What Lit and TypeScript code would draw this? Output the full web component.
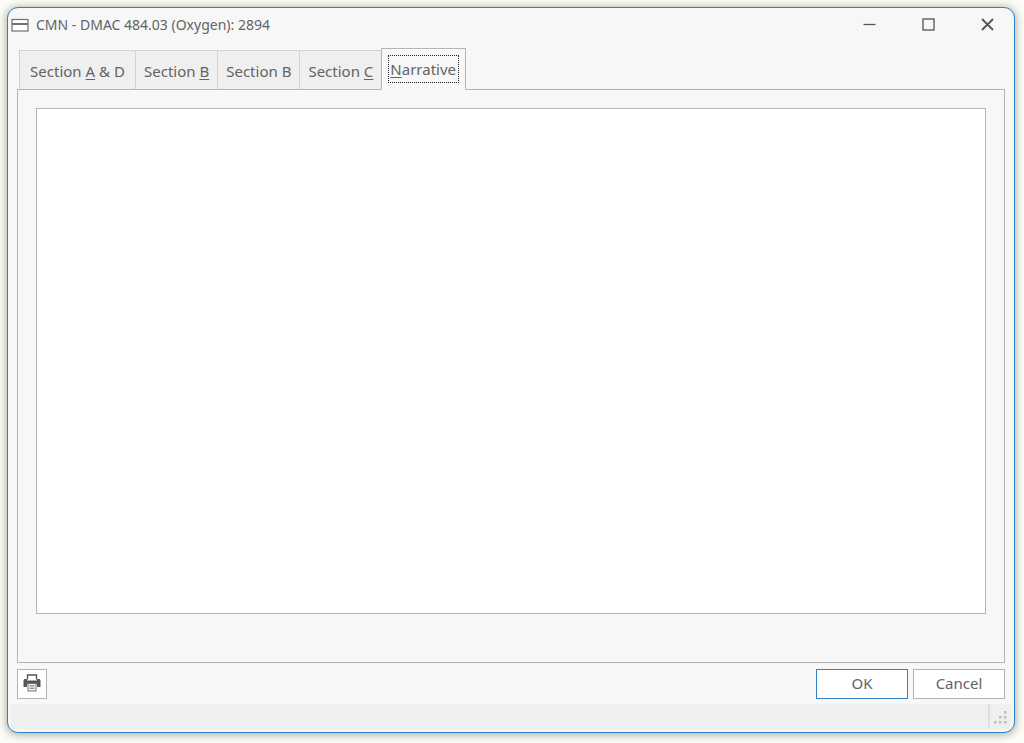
import { LitElement, html, css, svg } from "lit";
import { customElement, state } from "lit/decorators.js";

interface Tab {
  before: string;
  key: string;
  after: string;
}

const TABS: Tab[] = [
  { before: "Section ", key: "A", after: " & D" },
  { before: "Section ", key: "B", after: "" },
  { before: "Section B", key: "", after: "" },
  { before: "Section ", key: "C", after: "" },
  { before: "", key: "N", after: "arrative" },
];

const GRIP_DOTS = [
  [10, 0],
  [5, 5],
  [10, 5],
  [0, 10],
  [5, 10],
  [10, 10],
];

@customElement("app-root")
export class AppRoot extends LitElement {
  @state() private selected = 4;

  static styles = css`
    :host {
      display: flex;
      box-sizing: border-box;
      height: 100vh;
      padding: 7px 9px 10px 7px;
      background: #fdfdf8;
      font-family: "Noto Sans", "Open Sans", sans-serif;
      font-size: 15px;
      line-height: 20px;
      color: #636363;
    }
    * {
      box-sizing: border-box;
    }
    button {
      margin: 0;
      padding: 0;
      font: inherit;
      color: inherit;
      background: none;
      border: 0;
    }
    button:focus,
    textarea:focus {
      outline: none;
    }
    svg {
      display: block;
    }
    .window {
      flex: 1;
      min-width: 0;
      display: flex;
      flex-direction: column;
      background: #f7f7f7;
      border: 1px solid #2f82c8;
      border-radius: 11px;
      box-shadow: 0 1px 9px 1px rgba(70, 66, 45, 0.42);
      padding: 0 3px 3px;
    }
    .titlebar {
      display: flex;
      align-items: center;
      height: 33px;
    }
    .title {
      flex: 1;
      margin: 0 0 0 7px;
      font-size: 14px;
      font-weight: 400;
    }
    .caption {
      width: 59px;
      height: 32px;
      display: grid;
      place-items: center;
    }
    .controls {
      display: flex;
      margin-right: -6px;
    }
    .body {
      flex: 1;
      display: flex;
      flex-direction: column;
      padding: 7px 6px 5px 6px;
    }
    .tabs {
      display: flex;
      align-items: flex-end;
      padding-left: 2px;
      margin-bottom: -1px;
    }
    .tab {
      height: 40px;
      padding: 2px 8px 0 8px;
      background: #efefef;
      border: 1px solid #d2d2d2;
      border-right: 0;
      border-bottom-color: #b4b4b4;
      white-space: nowrap;
    }
    .tab:first-child {
      min-width: 116px;
    }
    .tab.active {
      position: relative;
      height: 42px;
      padding: 0 6px;
      background: #f7f7f7;
      border: 1px solid #b4b4b4;
      border-bottom-color: #f7f7f7;
    }
    .label {
      display: block;
      white-space: pre;
    }
    .active .label {
      padding: 3px 2px 3px 1px;
      border: 1px dotted #222;
    }
    .key {
      text-decoration: underline;
      text-underline-offset: 2px;
    }
    .panel {
      flex: 1;
      display: flex;
      border: 1px solid #b4b4b4;
      padding: 18px 18px 48px;
    }
    .notes {
      flex: 1;
      min-width: 0;
      margin: 0;
      padding: 4px;
      border: 1px solid #b4b4b4;
      border-radius: 0;
      background: #fff;
      font: inherit;
      color: inherit;
      resize: none;
    }
    .actions {
      display: flex;
      gap: 5px;
      margin-top: 6px;
    }
    .action {
      width: 92px;
      height: 30px;
      padding-bottom: 2px;
      background: #fff;
      border: 1px solid #b4b4b4;
    }
    .action.primary {
      border-color: #2f82c8;
    }
    .action.print {
      display: grid;
      place-items: center;
      width: 30px;
      margin-right: auto;
    }
    .status {
      display: flex;
      justify-content: flex-end;
      height: 25px;
      background: #efefef;
    }
    .grip {
      border-left: 2px solid #dedede;
      padding: 7px 4px 0;
      margin-bottom: 2px;
    }
  `;

  private printerIcon() {
    return svg`
      <svg width="18" height="18" viewBox="0 0 18 18" aria-hidden="true">
        <path d="M4.500 5.500V1h9v4.500" fill="#fff" stroke="#555" stroke-width="1.300" />
        <path d="M1.500 5h2.500v2h10V5h2.500l1 1v7H14V9H4v4H.5V6z" fill="#555" />
        <path d="M4 6.500h10V10H4z" fill="#555" />
        <rect x="5" y="9.500" width="8" height="7.500" fill="#f2f2f2" stroke="#777" />
        <path d="M6.500 11.800h5M6.500 14.200h5" stroke="#777" />
      </svg>`;
  }

  render() {
    return html`
      <main class="window">
        <header class="titlebar">
          <svg width="18" height="14" viewBox="0 0 18 14" aria-hidden="true">
            <rect x="1" y="1.500" width="16" height="11.500" fill="#fff" stroke="#707070" stroke-width="1.200" />
            <path d="M1 6h16" stroke="#707070" stroke-width="2" />
          </svg>
          <h1 class="title">CMN - DMAC 484.03 (Oxygen): 2894</h1>
          <div class="controls">
            <button class="caption" type="button" aria-label="Minimize">
              <svg width="13" height="13" viewBox="0 0 13 13"><path d="M.5 6.500h12" stroke="#555" stroke-width="1.300" /></svg>
            </button>
            <button class="caption" type="button" aria-label="Maximize">
              <svg width="13" height="13" viewBox="0 0 13 13">
                <rect x="1" y="1" width="11" height="11" fill="none" stroke="#555" stroke-width="1.300" />
              </svg>
            </button>
            <button class="caption" type="button" aria-label="Close">
              <svg width="13" height="13" viewBox="0 0 13 13">
                <path d="M1 1l11 11M12 1L1 12" stroke="#555" stroke-width="1.800" />
              </svg>
            </button>
          </div>
        </header>
        <div class="body">
          <div class="tabs" role="tablist">
            ${TABS.map(
              (tab, i) => html`<button
                type="button"
                role="tab"
                class="tab ${i === this.selected ? "active" : ""}"
                aria-selected=${i === this.selected ? "true" : "false"}
                @click=${() => (this.selected = i)}
              ><span class="label">${tab.before}<span class="key">${tab.key}</span>${tab.after}</span></button>`
            )}
          </div>
          <section class="panel" role="tabpanel">
            <textarea class="notes" aria-label="Narrative"></textarea>
          </section>
          <div class="actions">
            <button class="action print" type="button" aria-label="Print">${this.printerIcon()}</button>
            <button class="action primary" type="button">OK</button>
            <button class="action" type="button">Cancel</button>
          </div>
        </div>
        <footer class="status">
          <div class="grip">
            <svg width="13" height="13" viewBox="0 0 13 13" aria-hidden="true">
              ${GRIP_DOTS.map(([x, y]) => svg`<rect x=${x} y=${y} width="2.500" height="2.500" fill="#bcbcbc" />`)}
            </svg>
          </div>
        </footer>
      </main>
    `;
  }
}
